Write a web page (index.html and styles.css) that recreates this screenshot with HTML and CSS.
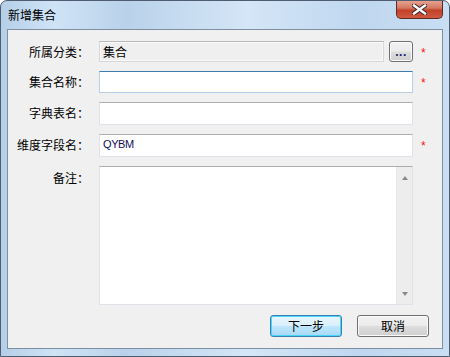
FILE: index.html
```html
<!DOCTYPE html>
<html>

<head>
    <meta charset='utf-8'>
    <title>新增集合</title>
    <link rel="stylesheet" href="styles.css">
</head>

<body>
    <div class="window">
        <div class="titlebar">
            <span class="title">新增集合</span>
            <div class="close">
                <svg width="15" height="11" viewBox="0 0 15 11">
                    <path d="M2 1.5 L13 9.5 M13 1.5 L2 9.5" stroke="#3a2a2a" stroke-width="4.4" stroke-linecap="square" />
                    <path d="M2 1.5 L13 9.5 M13 1.5 L2 9.5" stroke="#ffffff" stroke-width="2.4" stroke-linecap="square" />
                </svg>
            </div>
        </div>
        <div class="client">
            <form class="form">
                <label class="label">所属分类：</label>
                <div class="pick">
                    <div class="input input-disabled">集合</div>
                    <button type="button" class="btn btn-dots">...</button>
                </div>
                <span class="req">*</span>

                <label class="label">集合名称：</label>
                <div class="input input-focus"></div>
                <span class="req">*</span>

                <label class="label">字典表名：</label>
                <div class="input"></div>
                <span></span>

                <label class="label">维度字段名：</label>
                <div class="input input-latin">QYBM</div>
                <span class="req">*</span>

                <label class="label label-top">备注：</label>
                <div class="memo">
                    <div class="memo-text"></div>
                    <div class="scroll">
                        <span class="arrow arrow-up"></span>
                        <span class="arrow arrow-down"></span>
                    </div>
                </div>
                <span></span>
            </form>
            <div class="actions">
                <button type="button" class="btn btn-default">下一步</button>
                <button type="button" class="btn">取消</button>
            </div>
        </div>
    </div>
</body>

</html>
```

FILE: styles.css
```css
body {
    margin: 0;
    font-family: "Noto Sans CJK SC", "Liberation Sans", sans-serif;
    font-size: 12px;
    color: #000;
}

.window {
    width: 450px;
    height: 357px;
    box-sizing: border-box;
    border: 1px solid #4e5e70;
    border-radius: 7px 7px 0 0;
    background: linear-gradient(90deg, #b5cfe8 0%, #cfe3f6 12%, #b9d2ea 28%, #d4e6f7 55%, #bfd7ef 80%, #c9def3 100%);
    display: flex;
    flex-direction: column;
}

.titlebar {
    height: 28px;
    display: flex;
    align-items: flex-start;
    justify-content: space-between;
}

.title {
    margin: 6px 0 0 7px;
    line-height: 16px;
}

.close {
    width: 47px;
    height: 18px;
    margin-right: 6px;
    box-sizing: border-box;
    border: 1px solid #5b2a22;
    border-top: none;
    border-radius: 0 0 5px 5px;
    background: linear-gradient(#e7a18f 0%, #d47a64 40%, #c24128 55%, #cf5a42 100%);
    display: flex;
    align-items: center;
    justify-content: center;
}

.client {
    flex: 1;
    margin: 0 6px 7px 6px;
    border: 1px solid #7f8fa2;
    background: #f0f0f0;
    display: flex;
    flex-direction: column;
}

.form {
    display: grid;
    grid-template-columns: 81px 314px auto;
    grid-template-rows: 21px 22px 23px 23px 139px;
    column-gap: 10px;
    row-gap: 9px;
    padding-top: 11px;
    margin: 0;
}

.label {
    text-align: right;
    line-height: 21px;
    white-space: nowrap;
}

.label-top {
    line-height: 22px;
    padding-top: 1px;
}

.pick {
    display: flex;
    gap: 5px;
}

.input {
    box-sizing: border-box;
    height: 100%;
    flex: 1;
    background: #fff;
    border: 1px solid #e2e3ea;
    border-top-color: #abadb3;
    padding: 0 3px;
    line-height: 19px;
}

.input-disabled {
    background: #efefef;
    border-color: #d7d7d7;
    border-top-color: #b9b9b9;
    box-shadow: inset 0 0 0 1px #f9f9f9;
}

.input-focus {
    border-color: #b5cfe7;
    border-top-color: #3d7bad;
}

.input-latin {
    font-family: "Liberation Sans", sans-serif;
    font-size: 11px;
    letter-spacing: -0.4px;
    color: #10105a;
}

.req {
    color: #ff1010;
    font-family: "Liberation Sans", sans-serif;
    font-size: 12px;
    line-height: 24px;
    margin-left: -2px;
}

.memo {
    display: flex;
    box-sizing: border-box;
    background: #fff;
    border: 1px solid #e2e3ea;
    border-top-color: #abadb3;
}

.memo-text {
    flex: 1;
}

.scroll {
    width: 16px;
    box-sizing: border-box;
    border-left: 1px solid #e6e6e6;
    background: #ededed;
    display: flex;
    flex-direction: column;
    justify-content: space-between;
    align-items: center;
    padding: 9px 0 8px;
}

.arrow {
    width: 0;
    height: 0;
    border-left: 3px solid transparent;
    border-right: 3px solid transparent;
}

.arrow-up {
    border-bottom: 4px solid #8a8a8a;
}

.arrow-down {
    border-top: 4px solid #8a8a8a;
}

.actions {
    display: flex;
    justify-content: flex-end;
    gap: 15px;
    padding: 10px 13px 0 0;
}

.btn {
    width: 72px;
    height: 22px;
    box-sizing: border-box;
    border: 1px solid #707070;
    border-radius: 3px;
    background: linear-gradient(#f2f2f2 0%, #ebebeb 48%, #dddddd 52%, #cfcfcf 100%);
    box-shadow: inset 0 0 0 1px #fbfbfb;
    font-family: "Noto Sans CJK SC", sans-serif;
    font-size: 12px;
    padding: 0;
    line-height: 18px;
    color: #000;
}

.btn-default {
    border-color: #3c7fb1;
    background: linear-gradient(#eaf6fd 0%, #d9f0fc 48%, #bee6fd 52%, #a7d9f5 100%);
    box-shadow: inset 0 0 0 1px #48d6fc;
}

.btn-dots {
    width: 24px;
    height: 21px;
    font-family: "Liberation Sans", sans-serif;
    font-weight: bold;
    color: #1a1a6a;
    line-height: 20px;
    letter-spacing: 0.5px;
}
```
